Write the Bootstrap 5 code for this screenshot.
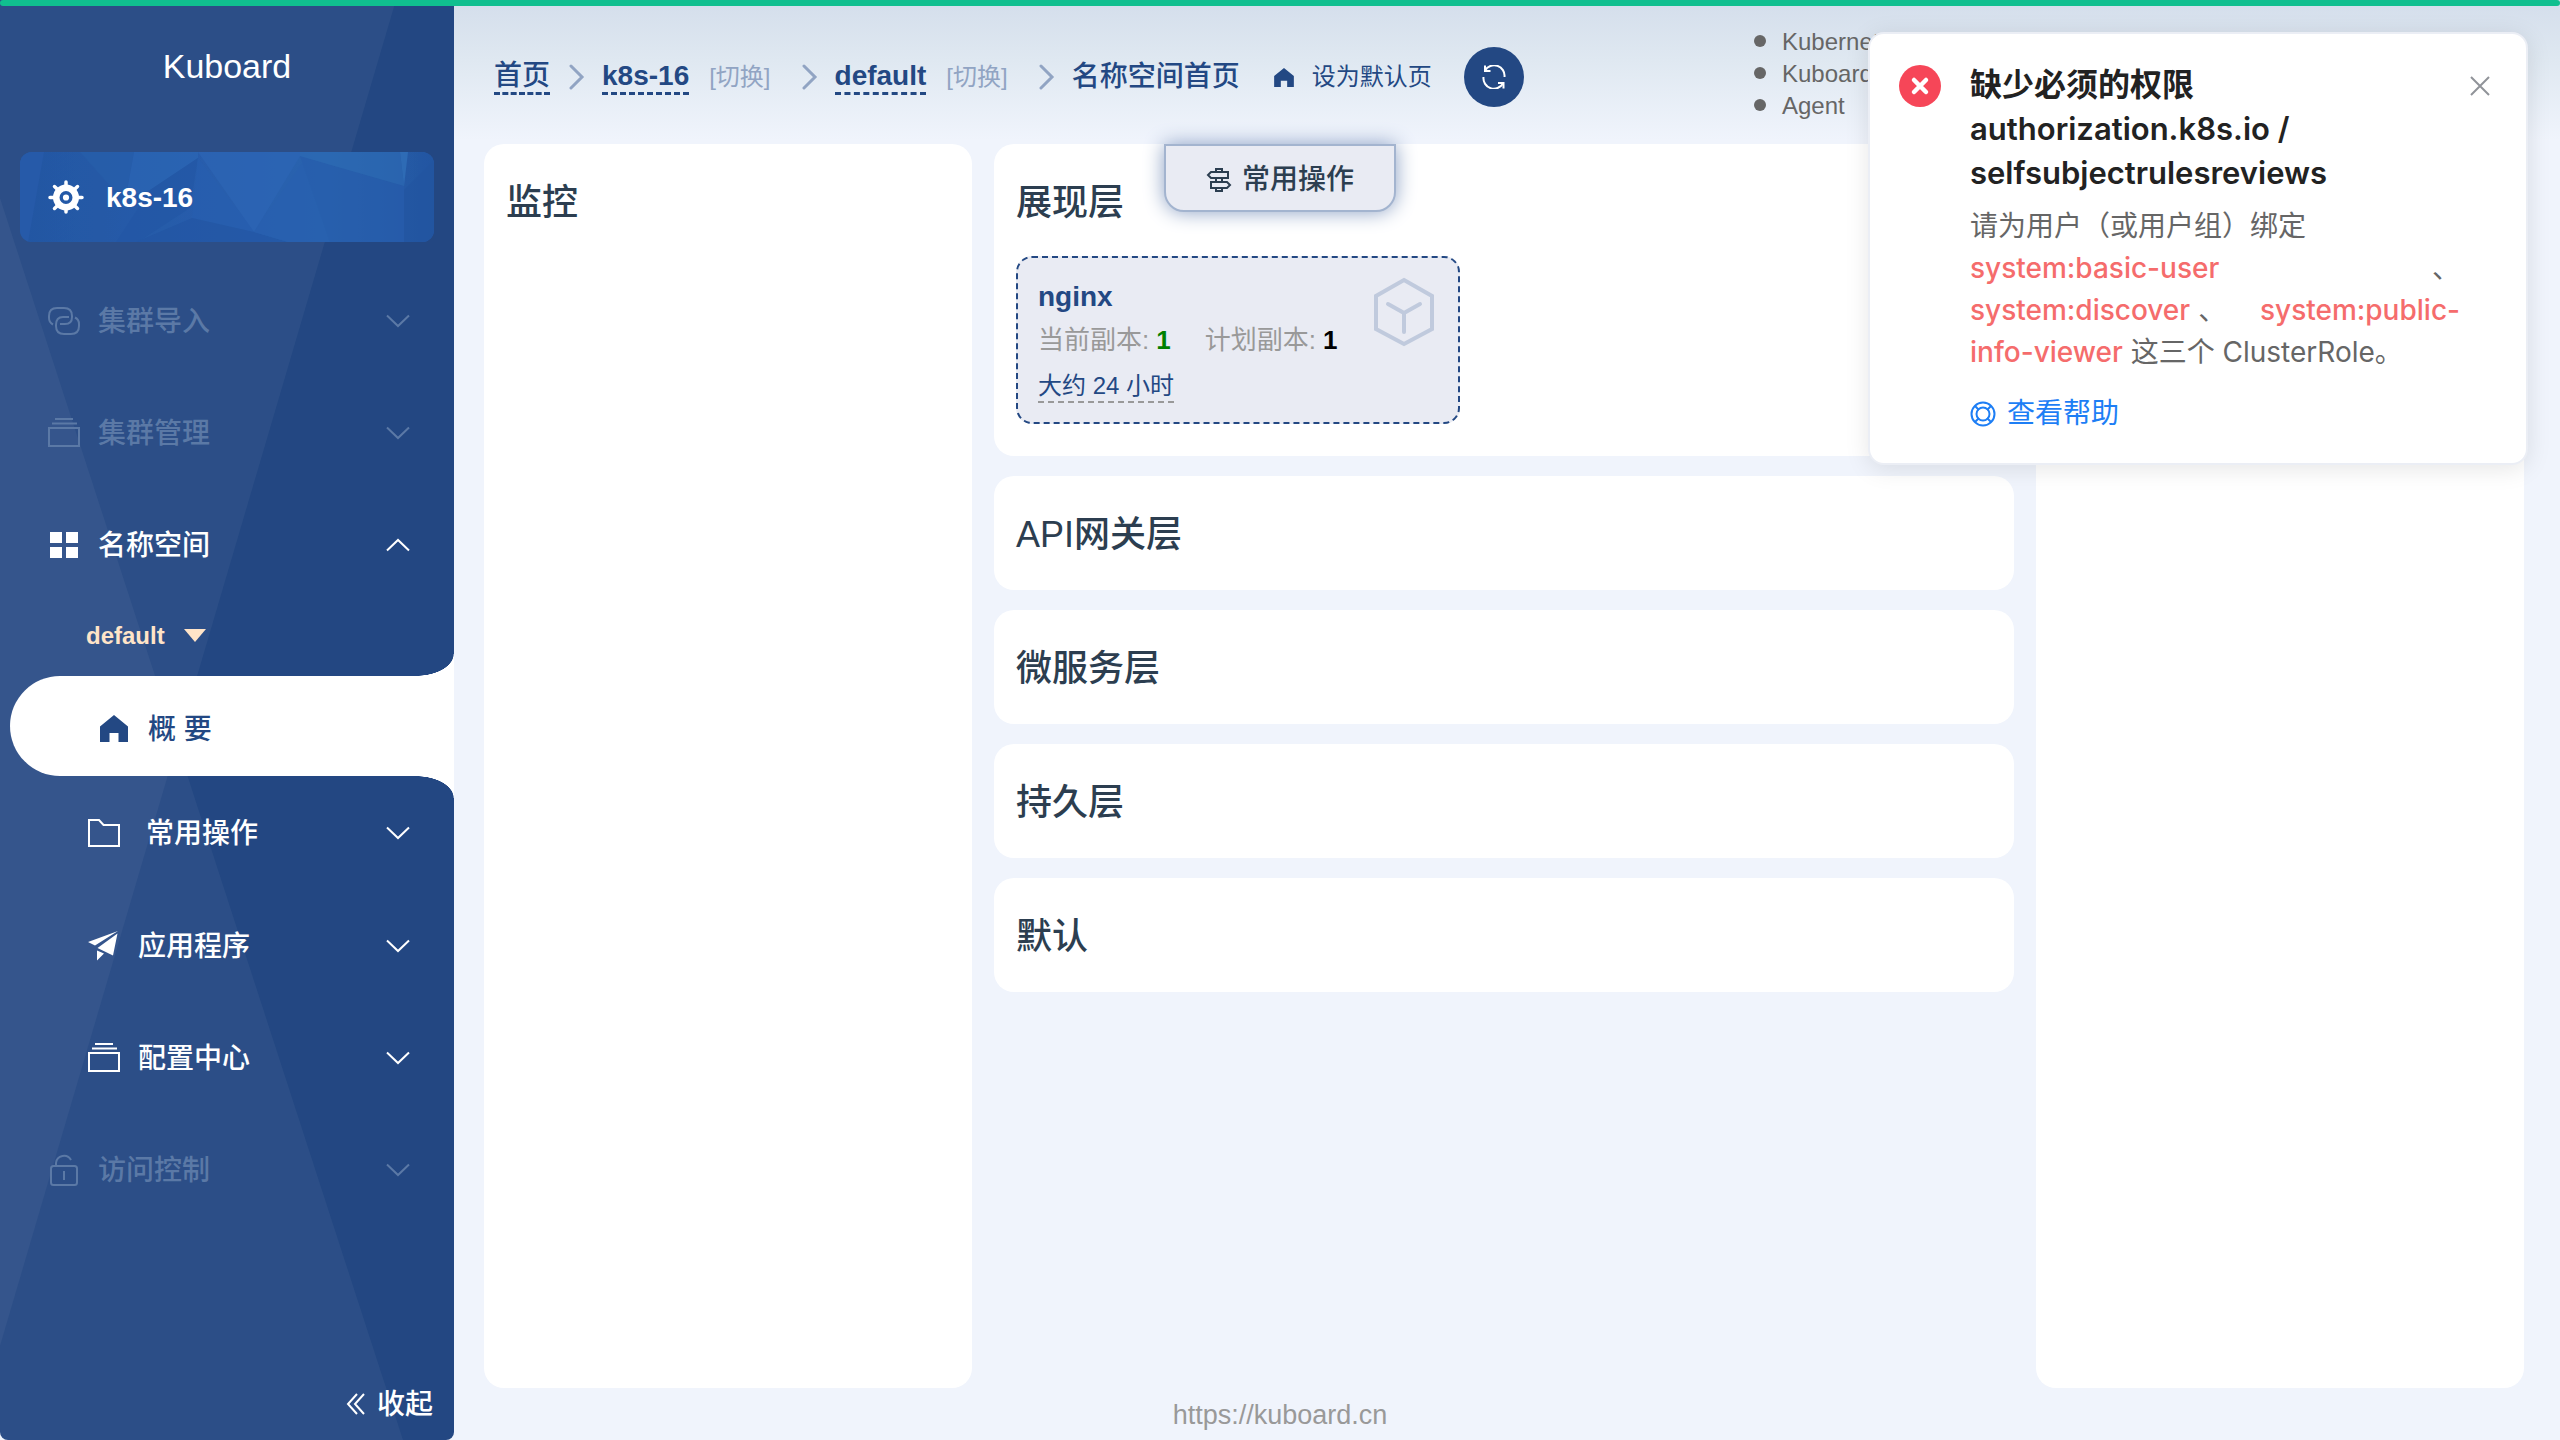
<!DOCTYPE html>
<html lang="zh-CN">
<head>
<meta charset="utf-8">
<meta name="viewport" content="width=device-width, initial-scale=1">
<title>Kuboard</title>
<link href="https://cdn.jsdelivr.net/npm/bootstrap@5.3.0/dist/css/bootstrap.min.css" rel="stylesheet">
<style>
:root{--navy:#234883;--page:#f0f4fc;--latin:"Liberation Sans","Noto Sans CJK SC",sans-serif;--rounded-latin:Inter,"Noto Sans CJK SC",sans-serif}
body{font-family:var(--latin);background:var(--page);color:#2c3e50;font-size:28px;line-height:40px;min-height:100vh}
svg{display:block;flex:none}
a{color:var(--navy)}
.progress-line{height:6px;background:#10bf8f;border-radius:3px;z-index:30}
.shell{min-height:100vh}
/* sidebar */
.side{width:454px;background:#234782;color:#fff;border-radius:0 0 8px 8px;overflow:hidden}
.side-art{z-index:0}
.side-body{z-index:1}
.brand{font-size:34px;line-height:40px;height:152px;padding-top:46px}
.cluster{height:90px;margin:0 20px 23px;border-radius:12px;overflow:hidden;background:#2459a7;padding-left:28px;gap:22px;font-weight:700}
.cluster:hover{color:#fff}
.cluster-art{z-index:0}
.cluster>.front{z-index:1}
.cluster span,.menu-row span,.collapse-btn span{padding-top:2px}
.menu-row{height:112px;padding:0 44px 0 48px;font-weight:500;border:0;background:none;color:#fff;width:100%;text-align:left}
.menu-row .ico{width:32px;margin-right:18px}
.menu-row.faint{color:#5b79a6}
.menu-row.sub{padding-left:88px}
.menu-row.tall{height:114px}
.menu-row.tall .ico{margin-right:26px}
.ns-pick{height:75px;padding:0 86px 6px;color:#ffe4c8;font-size:24px;font-weight:700;gap:19px;border:0;background:none}
.active-row{height:100px;margin-left:10px;background:#fff;border-radius:50px 0 0 50px;padding:5px 0 0 90px;gap:20px;font-weight:500;color:var(--navy)}
.active-row span{padding-top:2px}
.active-row::before,.active-row::after{content:"";position:absolute;right:0;width:38px;height:22px}
.active-row::before{bottom:100%;background:radial-gradient(38px 22px at 0 0,transparent 98%,#fff 100%)}
.active-row::after{top:100%;background:radial-gradient(38px 22px at 0 100%,transparent 98%,#fff 100%)}
.collapse-btn{color:#fff;border:0;background:none;font-weight:500;gap:12px;padding:0 21px 15px 0}
/* header */
.top{height:144px;padding:6px 36px 0 40px;background:linear-gradient(#d5dfec 6px,#dfe8f1 60px,#f0f4fc 140px)}
.crumbs{height:142px}
.crumbs .strong-link{font-weight:700;text-decoration:none;border-bottom:3px dashed var(--navy);line-height:32px}
.crumbs .cjk{font-weight:500}
.switch{font-size:24px;color:#91a4c3;text-decoration:none;margin-left:20px}
.sep{margin:0 17px 0 19px;color:#91a4c3}
.switch + .sep{margin-left:31px}
.set-home{font-size:24px;text-decoration:none;gap:18px;margin-left:34px}
.refresh{width:60px;height:60px;background:var(--navy);color:#fff;border:0;margin-left:32px}
.versions{font-size:24px;line-height:32px;color:#666;padding-top:20px;width:770px}
.versions li{gap:16px}
.dot{width:12px;height:12px;border-radius:50%;background:#666;margin-bottom:2px}
/* panels */
.board{padding:0 36px 0 30px;gap:22px}
.panel{background:#fff;border-radius:20px;padding:34px 22px 30px}
.panel-side{flex:0 0 488px}
.mid{gap:20px}
.mid .panel:first-child{padding-bottom:32px}
.panel h2{font-size:36px;line-height:50px;font-weight:500;margin:0}
.workload{width:444px;height:168px;margin-top:28px;border:2px dashed var(--navy);border-radius:16px;background:#e9ebf3;padding:19px 22px 0 20px;color:#999;font-size:26px}
.workload .wname{font-size:28px;font-weight:700;color:var(--navy);text-decoration:none;line-height:40px}
.counts{line-height:46px;gap:34px}
.counts b{color:#000;margin-left:7px}
.counts b.ok{color:green}
.age{font-size:24px;line-height:30px;color:var(--navy);border-bottom:2px dashed #999;margin-top:8px}
.quick{top:144px;left:1164px;width:232px;height:68px;padding-top:4px;border:2px solid #a3b4cf;border-radius:0 0 20px 20px;background:#e9ebf3;color:#2c3e50;box-shadow:0 0 20px #8a9fc3;gap:10px;font-weight:500;z-index:5}
.foot{height:52px;padding-top:2px;font-size:27px;color:#999}
/* notification */
.notice{top:32px;right:32px;width:660px;background:#fff;border:2px solid #ebeef5;border-radius:16px;box-shadow:0 4px 24px rgba(0,0,0,.1);padding:29px 36px 26px 29px;z-index:20;font-family:var(--rounded-latin);color:#666;gap:29px}
.notice .err{margin-top:2px}
.notice h1{font-size:32px;line-height:44px;font-weight:700;color:#222;margin:0 0 10px}
.notice h1 span{font-size:31px;font-weight:600}
.notice p{margin:0;line-height:42px;width:490px;font-size:28px}
.notice .role{color:#f56c6c;font-weight:500}
.help{font-family:var(--latin);color:#1d7ef5;text-decoration:none;gap:11px;margin-top:20px;line-height:42px}
.close-x{top:42px;right:36px;border:0;background:none;padding:0;color:#909399}
</style>
</head>
<body>
<svg width="0" height="0" class="position-absolute" aria-hidden="true">
  <defs>
    <symbol id="down" viewBox="0 0 24 14"><path d="M1 1.500l11 10.500L23 1.500" fill="none" stroke="currentColor" stroke-width="2"/></symbol>
    <symbol id="sepr" viewBox="0 0 16 26"><path d="M2 2l11 11L2 24" fill="none" stroke="currentColor" stroke-width="3" stroke-linecap="round"/></symbol>
    <symbol id="home" viewBox="0 0 28 27"><path d="M14 0L0 11.500V27h9.500v-9h9v9H28V11.500z" fill="currentColor"/></symbol>
    <symbol id="stack" viewBox="0 0 32 32"><path d="M1 11h30v18H1z" fill="none" stroke="currentColor" stroke-width="2"/><path d="M4 6.500h25M7 2h18" stroke="currentColor" stroke-width="2"/></symbol>
  </defs>
</svg>

<div class="progress-line position-fixed top-0 start-0 w-100"></div>

<div class="shell d-flex">
  <aside class="side position-relative flex-shrink-0 d-flex">
    <svg class="side-art position-absolute top-0 start-0 w-100 h-100" viewBox="0 0 454 1440" preserveAspectRatio="none" aria-hidden="true">
      <path d="M0 198L403 1440H0z" fill="#fff" fill-opacity=".045"/>
      <path d="M0 0H396L0 1346z" fill="#fff" fill-opacity=".045"/>
    </svg>
    <div class="side-body position-relative d-flex flex-column w-100">
      <div class="brand text-center">Kuboard</div>
      <a class="cluster position-relative d-flex align-items-center text-white text-decoration-none" href="#">
        <svg class="cluster-art position-absolute top-0 start-0 w-100 h-100" viewBox="0 0 414 90" preserveAspectRatio="none" aria-hidden="true">
          <defs><linearGradient id="glow" x1="0" x2="1"><stop offset="0" stop-color="#2357a3"/><stop offset=".55" stop-color="#295fae"/><stop offset=".75" stop-color="#2a65ae"/><stop offset="1" stop-color="#2356a2"/></linearGradient></defs>
          <path d="M0 0h414v90H0z" fill="url(#glow)"/>
          <g opacity=".65">
            <path d="M0 0h24L8 90H0z" fill="#295cad"/>
            <path d="M60 0h54l-8 44-14-8z" fill="#2760ab"/>
            <path d="M114 0h64v6L130 38l-24 6z" fill="#2c67b5"/>
            <path d="M178 6l-48 32-34 52h22l52-34z" fill="#2257a5"/>
            <path d="M178 0h102v4l-46 76z" fill="#2d66b6"/>
            <path d="M178 6l56 74-62-14z" fill="#275fb0"/>
            <path d="M172 66l62 14 34 10H116z" fill="#2255a3"/>
            <path d="M234 80l34 10h42l-26-82z" fill="#2860af"/>
            <path d="M280 4l104 30v56h-74z" fill="#275dac"/>
            <path d="M280 0h100l4 34-104-30z" fill="#2d6bb4"/>
            <path d="M380 0h8l-4 34z" fill="#3475bd"/>
            <path d="M384 38l30-30v82h-30z" fill="#2255a0"/>
          </g>
        </svg>
        <svg class="front position-relative" width="36" height="34" viewBox="0 0 36 34" aria-hidden="true">
          <g stroke="#fff" stroke-width="3.500" stroke-linecap="round"><path d="M18 2v30M2 17.500h32M6.500 6.500l23 22M29.500 6.500l-23 22"/></g>
          <circle cx="18" cy="17.500" r="13" fill="#fff"/><circle cx="18" cy="17.500" r="4.800" fill="#fff" stroke="#2459a7" stroke-width="3.400"/>
        </svg>
        <span class="front position-relative">k8s-16</span>
      </a>
      <button type="button" class="menu-row faint d-flex align-items-center">
        <svg class="ico" height="28" viewBox="0 0 32 28" fill="none" stroke="currentColor" stroke-width="2" aria-hidden="true"><path d="M5 17.500C2 16 1 14 1 11V9q0-8 8-8h7q8 0 8 8v1q0 7-7 7h-5"/><path d="M27 10.500c3 1.500 4 3.500 4 6.500v2q0 8-8 8h-7q-8 0-8-8v-1q0-8 7-8h6"/></svg>
        <span>集群导入</span><svg class="ms-auto" width="24" height="14" aria-hidden="true"><use href="#down"/></svg>
      </button>
      <button type="button" class="menu-row faint d-flex align-items-center">
        <svg class="ico" height="32" aria-hidden="true"><use href="#stack"/></svg>
        <span>集群管理</span><svg class="ms-auto" width="24" height="14" aria-hidden="true"><use href="#down"/></svg>
      </button>
      <button type="button" class="menu-row d-flex align-items-center">
        <svg class="ico" height="28" viewBox="0 0 32 28" fill="currentColor" aria-hidden="true"><path d="M2 1h12v11H2zM18 1h12v11H18zM2 16h12v11H2zM18 16h12v11H18z"/></svg>
        <span>名称空间</span><svg class="ms-auto" width="24" height="14" viewBox="0 0 24 14" aria-hidden="true"><path d="M1 12.500L12 2l11 10.500" fill="none" stroke="currentColor" stroke-width="2"/></svg>
      </button>
      <button type="button" class="ns-pick d-flex align-items-center">default
        <svg width="22" height="13" viewBox="0 0 22 13" aria-hidden="true"><path d="M0 0h22L11 13z" fill="currentColor"/></svg>
      </button>
      <a href="#" class="active-row position-relative d-flex align-items-center text-decoration-none">
        <svg width="28" height="27" aria-hidden="true"><use href="#home"/></svg><span>概 要</span>
      </a>
      <button type="button" class="menu-row sub tall d-flex align-items-center">
        <svg class="ico" height="28" viewBox="0 0 32 28" fill="none" stroke="currentColor" stroke-width="2" aria-hidden="true"><path d="M1 1h10l4.500 5H31v21H1z"/></svg>
        <span>常用操作</span><svg class="ms-auto" width="24" height="14" aria-hidden="true"><use href="#down"/></svg>
      </button>
      <button type="button" class="menu-row sub d-flex align-items-center">
        <svg class="ico" height="32" viewBox="0 0 32 32" fill="currentColor" aria-hidden="true"><path d="M30 1L0 12l7 3.500zM29.500 3.500L9.500 18 25 25.500zM9 20.500l7 3-7 7z"/></svg>
        <span>应用程序</span><svg class="ms-auto" width="24" height="14" aria-hidden="true"><use href="#down"/></svg>
      </button>
      <button type="button" class="menu-row sub d-flex align-items-center">
        <svg class="ico" height="32" aria-hidden="true"><use href="#stack"/></svg>
        <span>配置中心</span><svg class="ms-auto" width="24" height="14" aria-hidden="true"><use href="#down"/></svg>
      </button>
      <button type="button" class="menu-row faint d-flex align-items-center">
        <svg class="ico" height="32" viewBox="0 0 32 32" fill="none" stroke="currentColor" stroke-width="2" aria-hidden="true"><rect x="3" y="12" width="26" height="19" rx="2.500"/><path d="M8 12V9a8 8 0 0 1 15-3M16 17v9"/></svg>
        <span>访问控制</span><svg class="ms-auto" width="24" height="14" aria-hidden="true"><use href="#down"/></svg>
      </button>
      <button type="button" class="collapse-btn d-flex align-items-center mt-auto ms-auto">
        <svg width="19" height="22" viewBox="0 0 19 22" fill="none" stroke="currentColor" stroke-width="2" aria-hidden="true"><path d="M11 1L2 11l9 10M18 1L9 11l9 10"/></svg><span>收起</span>
      </button>
    </div>
  </aside>

  <div class="flex-grow-1 d-flex flex-column">
    <header class="top d-flex justify-content-between">
      <nav class="crumbs d-flex align-items-center" aria-label="breadcrumb">
        <a href="#" class="strong-link cjk">首页</a>
        <svg class="sep" width="16" height="26" aria-hidden="true"><use href="#sepr"/></svg>
        <a href="#" class="strong-link">k8s-16</a><a href="#" class="switch">[切换]</a>
        <svg class="sep" width="16" height="26" aria-hidden="true"><use href="#sepr"/></svg>
        <a href="#" class="strong-link">default</a><a href="#" class="switch">[切换]</a>
        <svg class="sep" width="16" height="26" aria-hidden="true"><use href="#sepr"/></svg>
        <a href="#" class="text-decoration-none cjk">名称空间首页</a>
        <a href="#" class="set-home d-flex align-items-center"><svg width="20" height="19" aria-hidden="true"><use href="#home"/></svg>设为默认页</a>
        <button type="button" class="refresh rounded-circle d-flex align-items-center justify-content-center" aria-label="刷新">
          <svg width="24" height="24" viewBox="0 0 24 24" fill="none" stroke="currentColor" stroke-width="2" aria-hidden="true"><path d="M3 5.500A10.500 10.500 0 0 1 22.500 12M21 18.500A10.500 10.500 0 0 1 1.500 12"/><path d="M3 .5v5.500h5.500M21.500 23.500V18H16"/></svg>
        </button>
      </nav>
      <ul class="versions list-unstyled mb-0">
        <li class="d-flex align-items-center"><span class="dot"></span>Kubernetes</li>
        <li class="d-flex align-items-center"><span class="dot"></span>Kuboard</li>
        <li class="d-flex align-items-center"><span class="dot"></span>Agent</li>
      </ul>
    </header>

    <main class="board d-flex flex-grow-1">
      <section class="panel panel-side"><h2>监控</h2></section>
      <div class="mid d-flex flex-column flex-grow-1">
        <section class="panel">
          <h2>展现层</h2>
          <div class="workload d-flex justify-content-between">
            <div>
              <a href="#" class="wname d-block">nginx</a>
              <div class="counts d-flex"><span>当前副本:<b class="ok">1</b></span><span>计划副本:<b>1</b></span></div>
              <span class="age d-inline-block">大约 24 小时</span>
            </div>
            <svg width="68" height="70" viewBox="0 0 68 70" fill="none" stroke="#c0cadd" stroke-width="4" aria-hidden="true"><path d="M36 3L64 19v33L36 67 8 52V19z"/><path d="M36 55V36L20 27M36 36l16-9" stroke-linecap="round"/></svg>
          </div>
        </section>
        <section class="panel"><h2>API网关层</h2></section>
        <section class="panel"><h2>微服务层</h2></section>
        <section class="panel"><h2>持久层</h2></section>
        <section class="panel"><h2>默认</h2></section>
      </div>
      <section class="panel panel-side"></section>
    </main>
    <div class="foot"></div>
  </div>
</div>
<footer class="foot position-absolute bottom-0 start-0 w-100 d-flex align-items-center justify-content-center">https://kuboard.cn</footer>

<button type="button" class="quick position-absolute d-flex align-items-center justify-content-center">
  <svg width="26" height="26" viewBox="0 0 26 26" fill="none" stroke="currentColor" stroke-width="2" aria-hidden="true"><path d="M5 5h17v6H5L2 8zM21 15H5v6h16l3-3zM10 5V2h6v3M10 21v3h6v-3M10 11v4M16 11v4"/></svg>常用操作
</button>

<div class="notice position-absolute d-flex align-items-start" role="alert">
  <svg class="err" width="42" height="42" viewBox="0 0 42 42" aria-hidden="true"><circle cx="21" cy="21" r="21" fill="#f64658"/><path d="M15 15l12 12M27 15L15 27" stroke="#fff" stroke-width="4.500" stroke-linecap="round"/></svg>
  <div>
    <h1>缺少必须的权限<br><span>authorization.k8s.io /<br>selfsubjectrulesreviews</span></h1>
    <p>请为用户（或用户组）绑定</p>
    <p class="d-flex justify-content-between"><span class="role">system:basic-user</span><span>、</span></p>
    <p class="d-flex"><span class="role">system:discover</span><span class="ms-2">、</span><span class="role ms-auto">system:public-</span></p>
    <p><span class="role">info-viewer</span> 这三个 ClusterRole。</p>
    <a href="#" class="help d-inline-flex align-items-center"><svg width="26" height="26" viewBox="0 0 26 26" fill="none" stroke="currentColor" stroke-width="2" aria-hidden="true"><circle cx="13" cy="13" r="11.500"/><circle cx="13" cy="13" r="6.500"/><path d="M5 5l4 4M21 5l-4 4M5 21l4-4M21 21l-4-4"/></svg>查看帮助</a>
  </div>
  <button type="button" class="close-x position-absolute" aria-label="关闭"><svg width="20" height="20" viewBox="0 0 20 20" stroke="currentColor" stroke-width="2" aria-hidden="true"><path d="M1 1l18 18M19 1L1 19"/></svg></button>
</div>
<script src="https://cdn.jsdelivr.net/npm/bootstrap@5.3.0/dist/js/bootstrap.bundle.min.js"></script>
</body>
</html>
